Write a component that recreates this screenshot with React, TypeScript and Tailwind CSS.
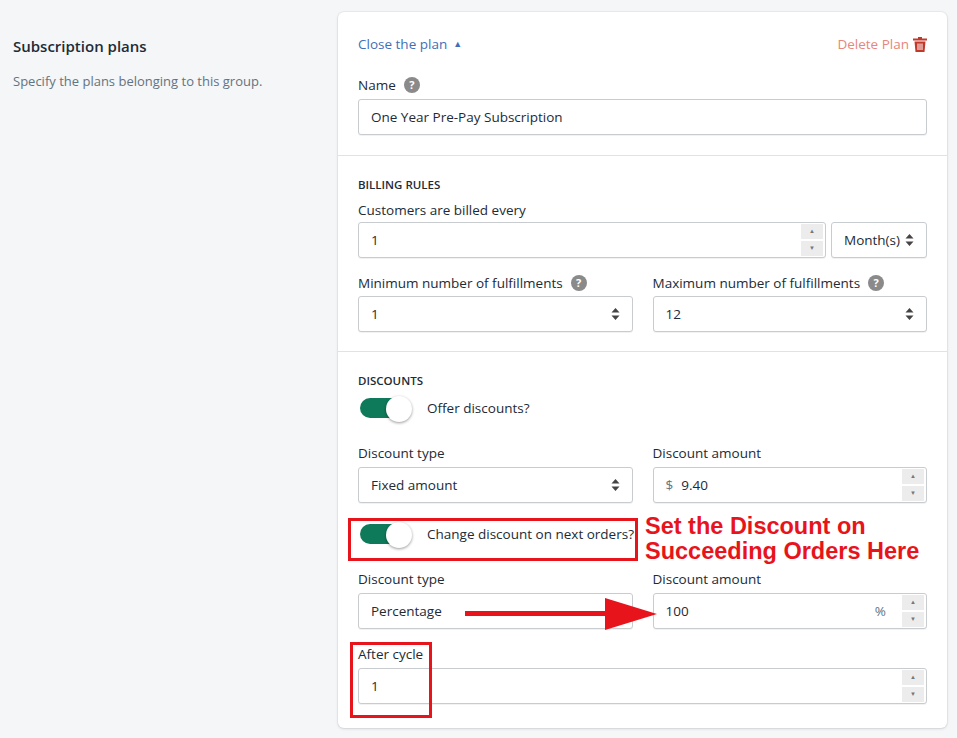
import React from "react";

const Spin = () => (
  <div className="flex flex-col gap-[2px] mr-[2px]">
    <div className="w-[22px] h-[15px] bg-[#ececec] flex items-center justify-center text-[6px] text-[#777]">▲</div>
    <div className="w-[22px] h-[15px] bg-[#ececec] flex items-center justify-center text-[6px] text-[#777]">▼</div>
  </div>
);

const UpDown = () => (
  <svg width="9" height="14" viewBox="0 0 9 14"><path d="M4.5 1 L8.5 5.5 H0.5Z M4.5 13 L8.5 8.5 H0.5Z" fill="#444" /></svg>
);

const Help = () => (
  <span className="inline-flex w-[16px] h-[16px] rounded-full bg-[#8a8a8a] text-white text-[11px] font-bold items-center justify-center ml-2">?</span>
);

const Box = ({ children, cls = "" }: { children: React.ReactNode; cls?: string }) => (
  <div className={"h-[36px] border border-[#c9cccf] rounded-[3px] bg-white flex items-center shadow-[0_1px_0_rgba(0,0,0,0.05)] " + cls}>{children}</div>
);

const Toggle = () => (
  <div className="relative w-[56px] h-[24px]">
    <div className="absolute left-[2px] top-[2px] w-[44px] h-[20px] rounded-full bg-[#0f7a5a]" />
    <div className="absolute left-[28px] top-0 w-[26px] h-[26px] rounded-full bg-white shadow-[0_1px_3px_rgba(0,0,0,0.4)]" />
  </div>
);

export default function App() {
  return (
    <div className="w-[957px] h-[738px] bg-[#f4f6f8] flex text-[#212b36] text-[13.5px] relative overflow-hidden" style={{ fontFamily: "'Open Sans', 'Noto Sans', sans-serif" }}>
      <div className="w-[338px] pl-[13px] pt-[35px]">
        <div className="text-[15px] font-semibold">Subscription plans</div>
        <div className="mt-[14px] text-[#637381] text-[13px]">Specify the plans belonging to this group.</div>
      </div>
      <div className="mt-[12px] w-[609px] h-[716px] bg-white rounded-[6px] shadow-[0_0_0_1px_rgba(63,63,68,0.05),0_1px_3px_rgba(63,63,68,0.15)]">
        <div className="px-[20px] pt-[22px] pb-[20px] border-b border-[#dfe3e8]">
          <div className="flex justify-between items-center h-[20px]">
            <span className="text-[#3f6fb8] flex items-center gap-[6px]">Close the plan <span className="text-[9px]">▲</span></span>
            <span className="text-[#e7867d] flex items-center gap-[4px]">Delete Plan
              <svg width="14" height="15" viewBox="0 0 14 15"><path d="M5 0h4v1.5h5V3.5H0V1.5h5z M1.5 4.5h11l-1 10.5h-9z" fill="#c0392b" /><path d="M5 6.5v6.5M9 6.5v6.5M7 6.5v6.5" stroke="#fff" strokeWidth="1" /></svg>
            </span>
          </div>
          <div className="mt-[21px] h-[20px] flex items-center">Name<Help /></div>
          <Box cls="mt-[4px] px-[12px]">One Year Pre-Pay Subscription</Box>
        </div>
        <div className="px-[20px] pt-[20px] pb-[19px] border-b border-[#dfe3e8]">
          <div className="text-[11.5px] font-semibold h-[18px] uppercase">Billing rules</div>
          <div className="mt-[6px] h-[18px]">Customers are billed every</div>
          <div className="mt-[4px] flex gap-[5px]">
            <Box cls="flex-1 pl-[12px] justify-between"><span>1</span><Spin /></Box>
            <Box cls="w-[96px] justify-center gap-[5px]">Month(s) <UpDown /></Box>
          </div>
          <div className="mt-[15px] grid grid-cols-2 gap-[20px]">
            <div>
              <div className="h-[20px] flex items-center">Minimum number of fulfillments<Help /></div>
              <Box cls="mt-[3px] px-[12px] justify-between"><span>1</span><UpDown /></Box>
            </div>
            <div>
              <div className="h-[20px] flex items-center">Maximum number of fulfillments<Help /></div>
              <Box cls="mt-[3px] px-[12px] justify-between"><span>12</span><UpDown /></Box>
            </div>
          </div>
        </div>
        <div className="px-[20px] pt-[20px]">
          <div className="text-[11.5px] font-semibold h-[18px]">DISCOUNTS</div>
          <div className="flex items-center gap-[13px] mt-[5px] h-[26px]"><Toggle /><span>Offer discounts?</span></div>
          <div className="mt-[22px] grid grid-cols-2 gap-[20px]">
            <div>
              <div className="h-[20px]">Discount type</div>
              <Box cls="mt-[4px] px-[12px] justify-between"><span>Fixed amount</span><UpDown /></Box>
            </div>
            <div>
              <div className="h-[20px]">Discount amount</div>
              <Box cls="mt-[4px] pl-[12px] justify-between"><span><span className="text-[#637381] mr-[8px]">$</span>9.40</span><Spin /></Box>
            </div>
          </div>
          <div className="flex items-center gap-[13px] mt-[18px] h-[26px]"><Toggle /><span>Change discount on next orders?</span></div>
          <div className="mt-[22px] grid grid-cols-2 gap-[20px]">
            <div>
              <div className="h-[20px]">Discount type</div>
              <Box cls="mt-[4px] px-[12px] justify-between"><span>Percentage</span><UpDown /></Box>
            </div>
            <div>
              <div className="h-[20px]">Discount amount</div>
              <Box cls="mt-[4px] pl-[12px] justify-between"><span>100</span><span className="flex items-center gap-[16px]"><span className="text-[#637381]">%</span><Spin /></span></Box>
            </div>
          </div>
          <div className="mt-[15px] h-[20px] flex items-end">After cycle</div>
          <Box cls="mt-[4px] pl-[12px] justify-between"><span>1</span><Spin /></Box>
        </div>
      </div>
      <div className="absolute left-[348px] top-[518px] w-[290px] h-[43px] border-[3px] border-[#e8141b]" />
      <div className="absolute left-[350px] top-[642px] w-[82px] h-[76px] border-[3px] border-[#e8141b]" />
      <div className="absolute left-[645px] top-[514px] text-[#e8141b] font-bold text-[23.5px] leading-[25px]" style={{ fontFamily: "'Liberation Sans', Arial, sans-serif" }}>Set the Discount on<br />Succeeding Orders Here</div>
      <svg className="absolute left-[465px] top-[598px]" width="192" height="32" viewBox="0 0 192 32"><rect x="0" y="13" width="142" height="5" fill="#e8141b" /><path d="M140 0 L192 16 L140 32Z" fill="#e8141b" /></svg>
    </div>
  );
}
